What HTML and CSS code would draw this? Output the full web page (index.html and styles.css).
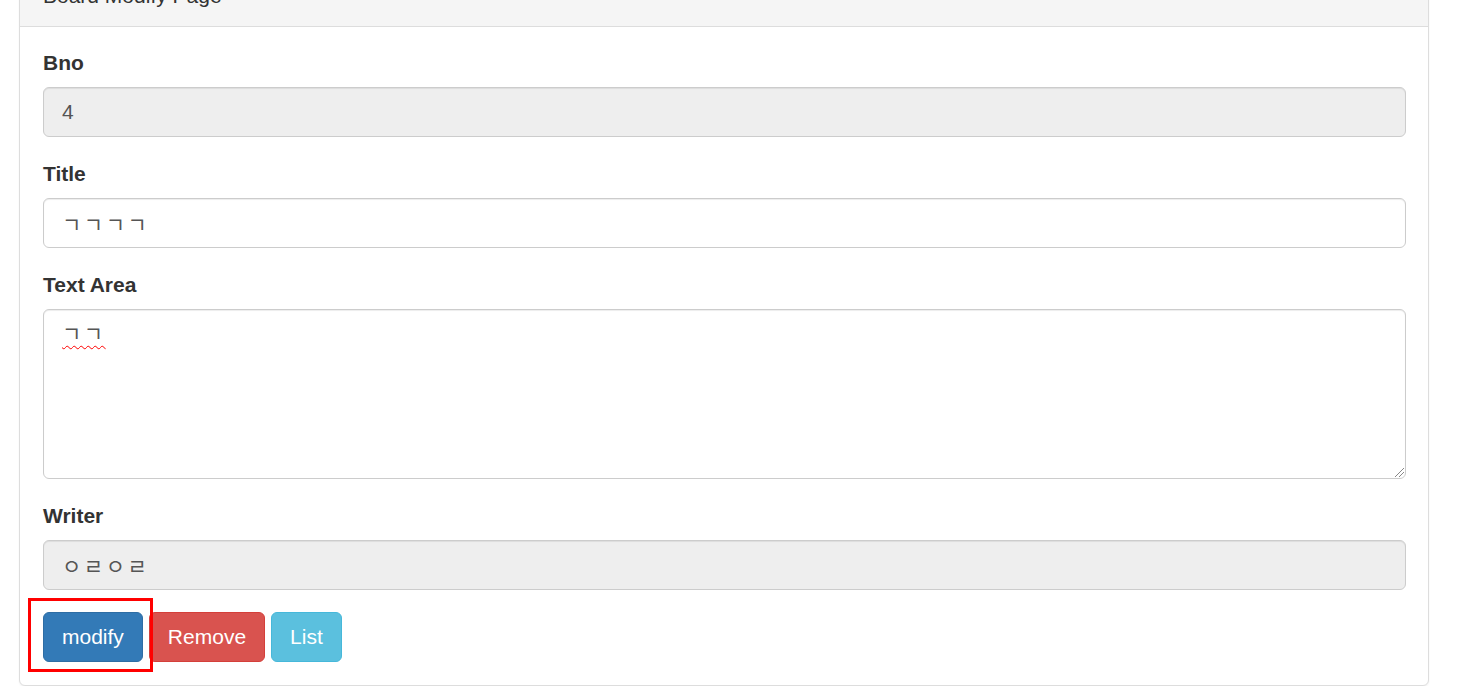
FILE: index.html
```html
<!DOCTYPE html>
<html lang="ko">
<head>
<meta charset="utf-8">
<title>Board Modify Page</title>
<link rel="stylesheet" href="styles.css">
</head>
<body>
<div class="page">
  <div class="panel">
    <div class="panel-heading">Board Modify Page</div>
    <div class="panel-body">
      <div class="form-group">
        <label class="label">Bno</label>
        <input class="form-control" type="text" value="4" readonly>
      </div>
      <div class="form-group">
        <label class="label">Title</label>
        <input class="form-control ko" type="text" value="ㄱㄱㄱㄱ">
      </div>
      <div class="form-group">
        <label class="label">Text Area</label>
        <div class="form-control textarea"><span class="misspelled ko">ㄱㄱ</span><span class="grip"></span></div>
      </div>
      <div class="form-group">
        <label class="label">Writer</label>
        <input class="form-control ko" type="text" value="ㅇㄹㅇㄹ" readonly>
      </div>
      <div class="btn-row">
        <span class="highlight"><button class="btn btn-primary" type="button">modify</button></span>
        <button class="btn btn-danger" type="button">Remove</button>
        <button class="btn btn-info" type="button">List</button>
      </div>
    </div>
  </div>
</div>
</body>
</html>
```
FILE: styles.css
```css
* { box-sizing: border-box; }
html, body {
  margin: 0;
  padding: 0;
  background: #fff;
  overflow: hidden;
}
body {
  font-family: "Liberation Sans", Arial, "Noto Sans CJK KR", sans-serif;
  font-size: 21px;
  line-height: 30px;
  color: #333;
}
.page {
  padding: 0 30px 0 19px;
}
.panel {
  margin-top: -35px;
  border: 1px solid #ddd;
  border-radius: 6px;
  background: #fff;
  box-shadow: 0 1px 2px rgba(0,0,0,.06);
}
.panel-heading {
  padding: 15px 23px;
  background: #f5f5f5;
  border-bottom: 1px solid #ddd;
  color: #333;
  border-radius: 5px 5px 0 0;
}
.panel-body {
  padding: 21px 22px 23px 23px;
}
.form-group {
  margin-bottom: 22px;
  display: flex;
  flex-direction: column;
}
.label {
  display: block;
  font-weight: bold;
  line-height: 30px;
  margin-bottom: 9px;
  color: #333;
}
.form-control {
  display: block;
  width: 100%;
  height: 50px;
  padding: 9px 18px;
  font-family: "Liberation Sans", Arial, "Noto Sans CJK KR", sans-serif;
  font-size: 21px;
  line-height: 30px;
  color: #555;
  background: #fff;
  border: 1px solid #ccc;
  border-radius: 6px;
  box-shadow: inset 0 1px 1px rgba(0,0,0,.075);
  outline: none;
}
.ko {
  letter-spacing: 2.5px;
}
.form-control[readonly] {
  background: #eee;
}
.textarea {
  height: 170px;
  position: relative;
}
.misspelled {
  text-decoration: underline wavy #f00;
  text-decoration-thickness: 1px;
  text-underline-offset: 4px;
  text-decoration-skip-ink: none;
}
.grip {
  position: absolute;
  right: 1px;
  bottom: 1px;
  width: 9px;
  height: 9px;
  background: linear-gradient(135deg, transparent 0 45%, #888 45% 52%, transparent 52% 70%, #888 70% 77%, transparent 77%);
}
.btn-row {
  display: flex;
  gap: 6px;
  align-items: flex-start;
}
.highlight {
  position: relative;
  display: block;
}
.highlight::after {
  content: "";
  position: absolute;
  left: -15px;
  top: -14px;
  right: -10px;
  bottom: -10px;
  border: 3px solid #f00;
  pointer-events: none;
}
.btn {
  display: block;
  height: 50px;
  padding: 9px 18px;
  font-family: "Liberation Sans", Arial, sans-serif;
  font-size: 21px;
  line-height: 30px;
  color: #fff;
  border: 1px solid transparent;
  border-radius: 6px;
  cursor: pointer;
}
.btn-primary { background: #337ab7; border-color: #2e6da4; }
.btn-danger { background: #d9534f; border-color: #d43f3a; }
.btn-info { background: #5bc0de; border-color: #46b8da; }
```
